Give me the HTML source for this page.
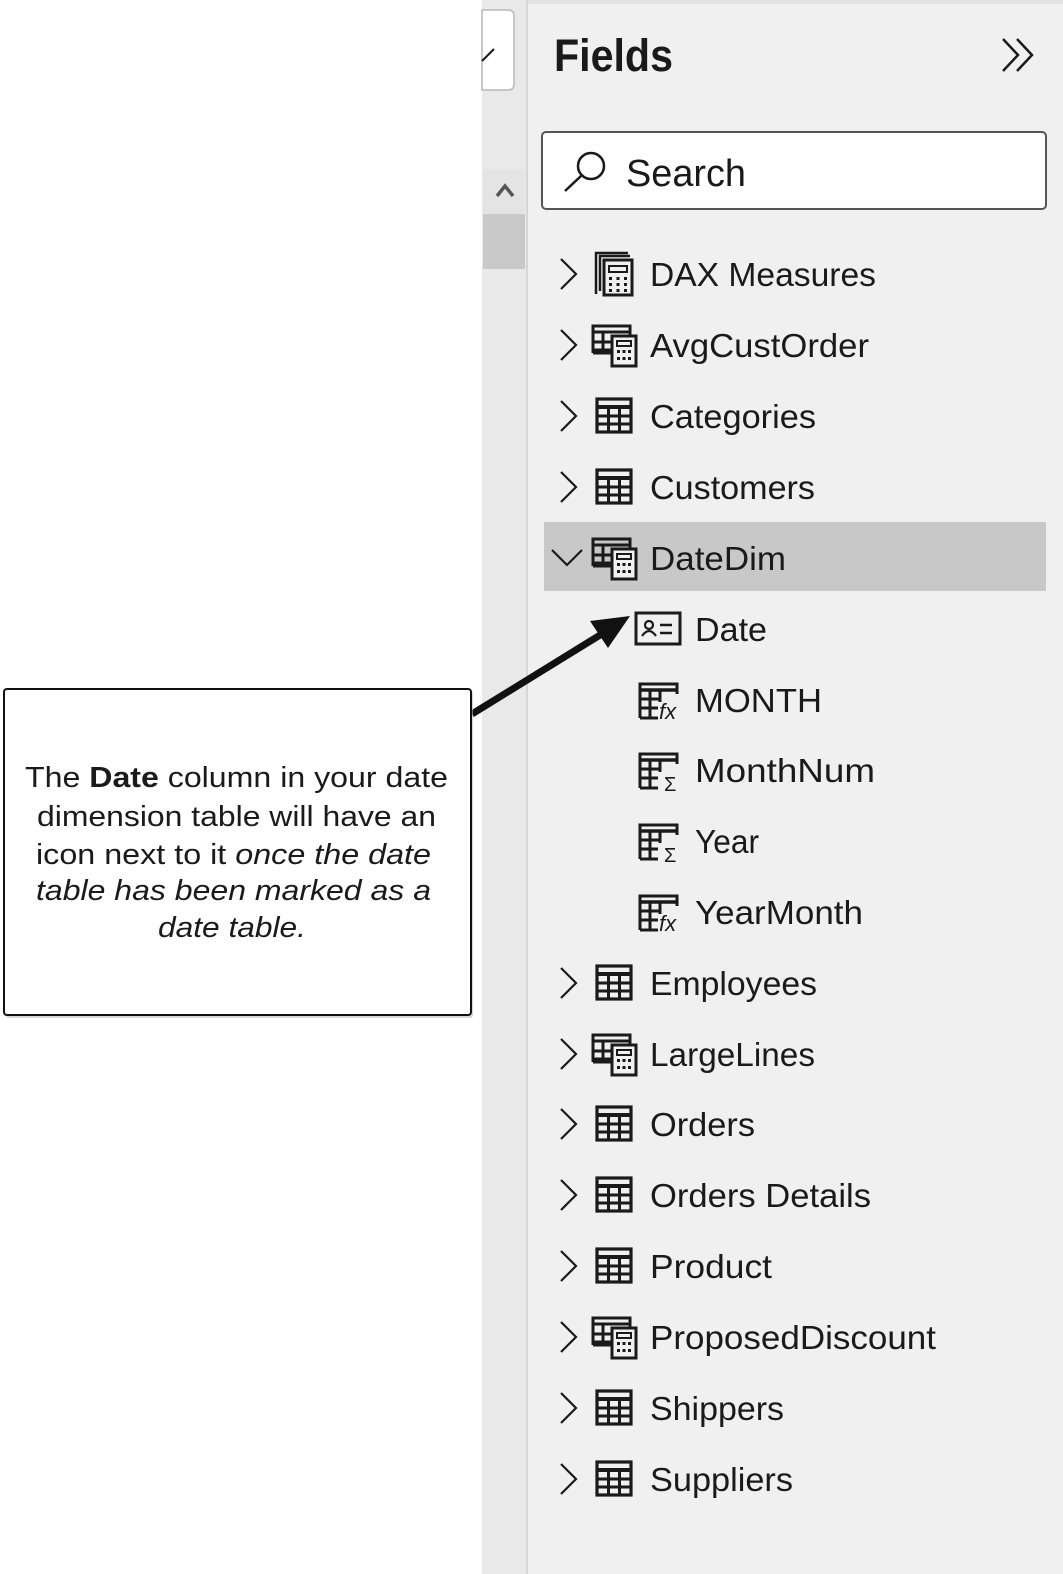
<!DOCTYPE html>
<html><head><meta charset="utf-8"><style>
html,body{margin:0;padding:0;background:#fff;}
svg{display:block}
text{font-family:"Liberation Sans",Arial,sans-serif;fill:#1a1a1a}
</style></head><body>
<svg width="1063" height="1574" viewBox="0 0 1063 1574" xmlns="http://www.w3.org/2000/svg">
<defs>
  <g id="chev"><path d="M561,-15 L576,0 L561,15" fill="none" stroke="#1a1a1a" stroke-width="2.2"/></g>
  <g id="tbl" fill="none" stroke="#1a1a1a">
    <rect x="597" y="-17" width="34" height="33" stroke-width="3.2"/>
    <line x1="597" y1="-9" x2="631" y2="-9" stroke-width="4"/>
    <line x1="608.5" y1="-9" x2="608.5" y2="16" stroke-width="3"/>
    <line x1="619.5" y1="-9" x2="619.5" y2="16" stroke-width="3"/>
    <line x1="597" y1="0" x2="631" y2="0" stroke-width="3"/>
    <line x1="597" y1="8" x2="631" y2="8" stroke-width="3"/>
  </g>
  <g id="ctbl" fill="none" stroke="#1a1a1a">
    <path d="M593,8 L593,-19 L630,-19 L630,-10" stroke-width="3"/>
    <line x1="593" y1="-13" x2="630" y2="-13" stroke-width="3"/>
    <line x1="593" y1="-3" x2="611" y2="-3" stroke-width="3"/>
    <line x1="593" y1="5" x2="611" y2="5" stroke-width="3"/>
    <line x1="603" y1="-13" x2="603" y2="8" stroke-width="3"/>
    <line x1="593" y1="8" x2="611" y2="8" stroke-width="3"/>
    <rect x="612" y="-9" width="24" height="30" fill="#f0f0f0" stroke-width="3"/>
    <rect x="617" y="-4" width="14" height="5" stroke-width="2"/>
    <g fill="#1a1a1a" stroke="none">
      <rect x="617" y="5" width="3" height="3"/><rect x="622.5" y="5" width="3" height="3"/><rect x="628" y="5" width="3" height="3"/>
      <rect x="617" y="12" width="3" height="3"/><rect x="622.5" y="12" width="3" height="3"/><rect x="628" y="12" width="3" height="3"/>
    </g>
  </g>
  <g id="calc" fill="none" stroke="#1a1a1a">
    <path d="M596,20 L596,-21 L628,-21" stroke-width="2.5"/>
    <path d="M600,17 L600,-18 L630,-18" stroke-width="2.5"/>
    <rect x="604" y="-14" width="28" height="35" stroke-width="3"/>
    <rect x="609" y="-8" width="18" height="6" stroke-width="2"/>
    <g fill="#1a1a1a" stroke="none">
      <rect x="609" y="3" width="3" height="3"/><rect x="616.5" y="3" width="3" height="3"/><rect x="624" y="3" width="3" height="3"/>
      <rect x="609" y="9" width="3" height="3"/><rect x="616.5" y="9" width="3" height="3"/><rect x="624" y="9" width="3" height="3"/>
      <rect x="609" y="15" width="3" height="3"/><rect x="616.5" y="15" width="3" height="3"/><rect x="624" y="15" width="3" height="3"/>
    </g>
  </g>
  <g id="colt" fill="none" stroke="#1a1a1a">
    <path d="M640,18 L640,-16 L677,-16 L677,-6" stroke-width="3"/>
    <line x1="640" y1="-10" x2="677" y2="-10" stroke-width="3.5"/>
    <line x1="640" y1="-1" x2="660" y2="-1" stroke-width="3"/>
    <line x1="640" y1="8" x2="658" y2="8" stroke-width="3"/>
    <line x1="650" y1="-10" x2="650" y2="18" stroke-width="3"/>
    <line x1="640" y1="18" x2="658" y2="18" stroke-width="3"/>
    <line x1="660" y1="-10" x2="660" y2="2" stroke-width="3"/>
  </g>
</defs>

<rect x="482" y="0" width="46" height="1574" fill="#e9e9e9"/>
<rect x="526" y="0" width="2" height="1574" fill="#d6d6d6"/>
<rect x="528" y="0" width="535" height="1574" fill="#f0f0f0"/>
<rect x="528" y="0" width="535" height="4" fill="#e2e2e2"/>
<path d="M482,10 L508,10 Q514,10 514,16 L514,84 Q514,90 508,90 L482,90 Z" fill="#fff" stroke="#b8b8b8" stroke-width="1.5"/>
<line x1="482" y1="61" x2="494" y2="49" stroke="#1a1a1a" stroke-width="2"/>
<rect x="483" y="170" width="42" height="44" fill="#e4e4e4"/>
<path d="M497,196 L505,186 L513,196" fill="none" stroke="#555" stroke-width="3.5"/>
<rect x="483" y="214" width="42" height="55" fill="#c9c9c9"/>

<text x="554" y="71" font-size="45" font-weight="bold" textLength="119" lengthAdjust="spacingAndGlyphs">Fields</text>
<path d="M1003,39 L1018,55 L1003,71 M1017,39 L1032,55 L1017,71" fill="none" stroke="#1a1a1a" stroke-width="2.5"/>
<rect x="542" y="132" width="504" height="77" rx="4" fill="#fff" stroke="#555" stroke-width="2"/>
<circle cx="591" cy="166" r="13" fill="none" stroke="#1a1a1a" stroke-width="2.5"/>
<line x1="581" y1="176" x2="565" y2="191" stroke="#1a1a1a" stroke-width="2.5"/>
<text x="626" y="186" font-size="38" textLength="120" lengthAdjust="spacingAndGlyphs" fill="#222">Search</text>

<rect x="544" y="522" width="502" height="69" fill="#c8c8c8"/>

<g transform="translate(0,274)"><use href="#chev"/><use href="#calc"/><text x="650" y="12" font-size="33" textLength="226" lengthAdjust="spacingAndGlyphs">DAX Measures</text></g>
<g transform="translate(0,345)"><use href="#chev"/><use href="#ctbl"/><text x="650" y="12" font-size="33" textLength="219" lengthAdjust="spacingAndGlyphs">AvgCustOrder</text></g>
<g transform="translate(0,416)"><use href="#chev"/><use href="#tbl"/><text x="650" y="12" font-size="33" textLength="166" lengthAdjust="spacingAndGlyphs">Categories</text></g>
<g transform="translate(0,487)"><use href="#chev"/><use href="#tbl"/><text x="650" y="12" font-size="33" textLength="165" lengthAdjust="spacingAndGlyphs">Customers</text></g>
<g transform="translate(0,558)"><path d="M552,-8 L567,7 L582,-8" fill="none" stroke="#1a1a1a" stroke-width="2.2"/><use href="#ctbl"/><text x="650" y="12" font-size="33" textLength="136" lengthAdjust="spacingAndGlyphs">DateDim</text></g>
<g transform="translate(0,629)">
  <rect x="636" y="-16" width="44" height="31" fill="none" stroke="#1a1a1a" stroke-width="3"/>
  <circle cx="649" cy="-4" r="4" fill="none" stroke="#1a1a1a" stroke-width="2.2"/>
  <path d="M642,7 Q649,-3 656,7" fill="none" stroke="#1a1a1a" stroke-width="2.2"/>
  <line x1="660" y1="-4" x2="672" y2="-4" stroke="#1a1a1a" stroke-width="2.5"/>
  <line x1="660" y1="4" x2="672" y2="4" stroke="#1a1a1a" stroke-width="2.5"/>
  <text x="695" y="12" font-size="33" textLength="72" lengthAdjust="spacingAndGlyphs">Date</text></g>
<g transform="translate(0,700)"><use href="#colt"/><text x="659" y="19" font-size="22" font-style="italic" font-family="Liberation Serif,serif">fx</text><text x="695" y="12" font-size="33" textLength="127" lengthAdjust="spacingAndGlyphs">MONTH</text></g>
<g transform="translate(0,770)"><use href="#colt"/><text x="664" y="21" font-size="20">Σ</text><text x="695" y="12" font-size="33" textLength="180" lengthAdjust="spacingAndGlyphs">MonthNum</text></g>
<g transform="translate(0,841)"><use href="#colt"/><text x="664" y="21" font-size="20">Σ</text><text x="695" y="12" font-size="33" textLength="64" lengthAdjust="spacingAndGlyphs">Year</text></g>
<g transform="translate(0,912)"><use href="#colt"/><text x="659" y="19" font-size="22" font-style="italic" font-family="Liberation Serif,serif">fx</text><text x="695" y="12" font-size="33" textLength="168" lengthAdjust="spacingAndGlyphs">YearMonth</text></g>
<g transform="translate(0,983)"><use href="#chev"/><use href="#tbl"/><text x="650" y="12" font-size="33" textLength="167" lengthAdjust="spacingAndGlyphs">Employees</text></g>
<g transform="translate(0,1054)"><use href="#chev"/><use href="#ctbl"/><text x="650" y="12" font-size="33" textLength="165" lengthAdjust="spacingAndGlyphs">LargeLines</text></g>
<g transform="translate(0,1124)"><use href="#chev"/><use href="#tbl"/><text x="650" y="12" font-size="33" textLength="105" lengthAdjust="spacingAndGlyphs">Orders</text></g>
<g transform="translate(0,1195)"><use href="#chev"/><use href="#tbl"/><text x="650" y="12" font-size="33" textLength="221" lengthAdjust="spacingAndGlyphs">Orders Details</text></g>
<g transform="translate(0,1266)"><use href="#chev"/><use href="#tbl"/><text x="650" y="12" font-size="33" textLength="122" lengthAdjust="spacingAndGlyphs">Product</text></g>
<g transform="translate(0,1337)"><use href="#chev"/><use href="#ctbl"/><text x="650" y="12" font-size="33" textLength="286" lengthAdjust="spacingAndGlyphs">ProposedDiscount</text></g>
<g transform="translate(0,1408)"><use href="#chev"/><use href="#tbl"/><text x="650" y="12" font-size="33" textLength="134" lengthAdjust="spacingAndGlyphs">Shippers</text></g>
<g transform="translate(0,1479)"><use href="#chev"/><use href="#tbl"/><text x="650" y="12" font-size="33" textLength="143" lengthAdjust="spacingAndGlyphs">Suppliers</text></g>

<line x1="472" y1="714" x2="605" y2="632" stroke="#111" stroke-width="7"/>
<polygon points="630,616 590,621 608,648" fill="#111"/>

<rect x="6" y="691" width="467" height="327" rx="3" fill="#bbb" opacity="0.6"/>
<rect x="4" y="689" width="467" height="326" rx="3" fill="#fff" stroke="#111" stroke-width="2"/>
<g font-size="29" text-anchor="start">
<text x="25" y="787" textLength="423" lengthAdjust="spacingAndGlyphs">The <tspan font-weight="bold">Date</tspan> column in your date</text>
<text x="37" y="826" textLength="399" lengthAdjust="spacingAndGlyphs">dimension table will have an</text>
<text x="36" y="864" textLength="395" lengthAdjust="spacingAndGlyphs">icon next to it <tspan font-style="italic">once the date</tspan></text>
<text x="36" y="900" textLength="395" lengthAdjust="spacingAndGlyphs" font-style="italic">table has been marked as a</text>
<text x="158" y="937" textLength="148" lengthAdjust="spacingAndGlyphs" font-style="italic">date table.</text>
</g>
</svg>
</body></html>
